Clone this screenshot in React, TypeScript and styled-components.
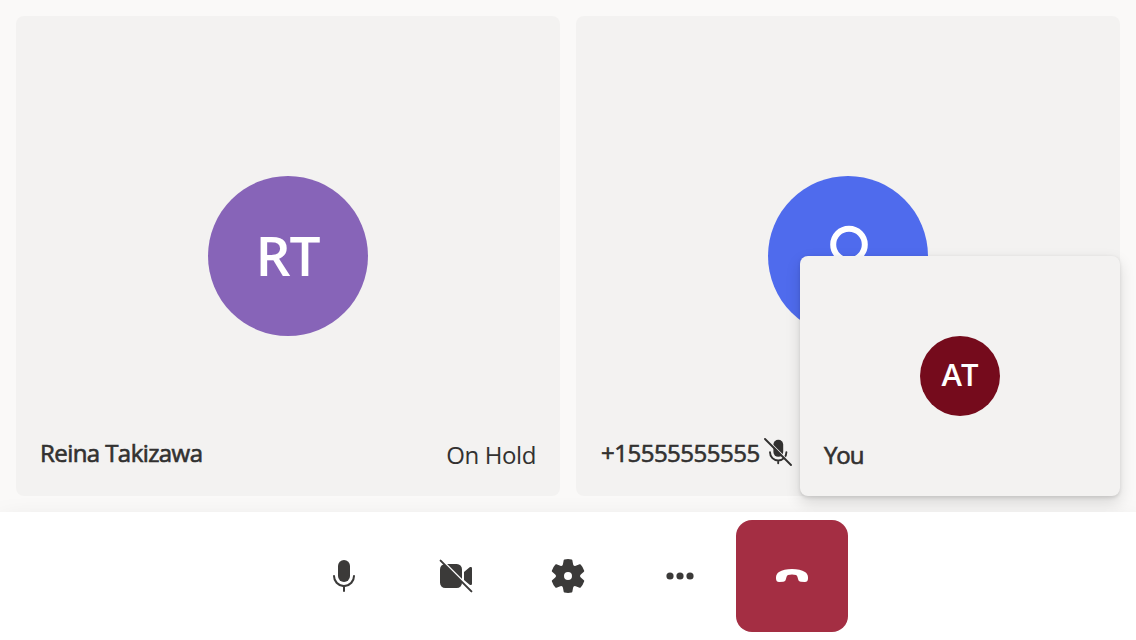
import React from 'react';
import styled, { createGlobalStyle } from 'styled-components';

const GlobalStyle = createGlobalStyle`
  * { box-sizing: border-box; }
  body {
    margin: 0;
    background: #faf9f8;
    color: #323130;
    font-family: 'Open Sans', 'Noto Sans', sans-serif;
    overflow: hidden;
  }
`;

const CallScreen = styled.main`
  height: 640px;
  display: flex;
  flex-direction: column;
`;

const Stage = styled.section`
  position: relative;
  flex: 1;
  display: grid;
  grid-template-columns: 1fr 1fr;
  gap: 16px;
  padding: 16px;
`;

const Tile = styled.article`
  display: grid;
  grid-template-rows: 160px 160px 160px;
  justify-items: center;
  border-radius: 8px;
  background: #f3f2f1;
`;

const Avatar = styled.div<{ $size: number; $color: string; $font?: number }>`
  grid-row: 2;
  display: flex;
  align-items: center;
  justify-content: center;
  width: ${p => p.$size}px;
  height: ${p => p.$size}px;
  padding-bottom: ${p => (p.$font ? 3 : 0)}px;
  padding-right: ${p => (p.$font ? 1 : 0)}px;
  border-radius: 50%;
  background: ${p => p.$color};
  color: #fff;
  font-size: ${p => p.$font ?? 16}px;
  font-weight: 600;
  line-height: 1;
  letter-spacing: -1px;
`;

const Caption = styled.footer`
  grid-row: 3;
  align-self: end;
  justify-self: stretch;
  display: flex;
  align-items: center;
  height: 48px;
  margin-bottom: 16px;
  padding: 0 24px;
  line-height: 32px;
  white-space: nowrap;
`;

const Name = styled.span<{ $spacing: number; $lift?: number; $indent?: number }>`
  margin-top: ${p => -(p.$lift ?? 6)}px;
  margin-left: ${p => p.$indent ?? 0}px;
  font-size: 24px;
  -webkit-text-stroke: 0.65px currentColor;
  letter-spacing: ${p => p.$spacing}px;
`;

const Status = styled.span`
  margin: -2px 0 0 auto;
  font-size: 24px;
  letter-spacing: -0.4px;
`;

const MutedIcon = styled.svg`
  width: 28px;
  height: 28px;
  margin: -8px 0 0 4px;
`;

const LocalPreview = styled.aside`
  position: absolute;
  right: 16px;
  bottom: 16px;
  width: 320px;
  height: 240px;
  display: grid;
  grid-template-rows: 80px 80px 80px;
  justify-items: center;
  border-radius: 8px;
  background: #f3f2f1;
  box-shadow: 0 6.4px 14.4px rgba(0, 0, 0, 0.132), 0 1.2px 3.6px rgba(0, 0, 0, 0.108);
`;

const ControlBar = styled.nav`
  position: relative;
  display: flex;
  justify-content: center;
  height: 128px;
  padding: 8px 0;
  background: #fff;
  box-shadow: 0 12.8px 28.8px rgba(0, 0, 0, 0.132);
`;

const ControlButton = styled.button<{ $danger?: boolean }>`
  display: flex;
  align-items: center;
  justify-content: center;
  width: 112px;
  height: 112px;
  padding: 0;
  border: 0;
  border-radius: 16px;
  background: ${p => (p.$danger ? '#a42e43' : 'transparent')};
  color: ${p => (p.$danger ? '#fff' : '#3b3a39')};

  svg {
    width: 40px;
    height: 40px;
    fill: currentColor;
  }
`;

const MicIcon = () => (
  <svg viewBox="0 0 20 20">
    <path d="M10 13a3 3 0 0 0 3-3V5a3 3 0 0 0-6 0v5a3 3 0 0 0 3 3Z" />
    <path d="M5 9.5a.5.5 0 0 1 .5.5 4.5 4.5 0 0 0 9 0 .5.5 0 0 1 1 0 5.5 5.5 0 0 1-5 5.48v2.02a.5.5 0 0 1-1 0v-2.02A5.5 5.5 0 0 1 4.5 10a.5.5 0 0 1 .5-.5Z" />
  </svg>
);

const CameraOffIcon = () => (
  <svg viewBox="0 0 20 20">
    <mask id="camera-cut">
      <path fill="#fff" d="M0 0h20v20H0z" />
      <path stroke="#000" strokeWidth="1.1" d="M1.75 .95l18 18" />
    </mask>
    <g mask="url(#camera-cut)">
      <rect x="2" y="4" width="11" height="12" rx="2.6" />
      <path d="M14 8l2.83-2.33c.5-.4 1.17-.1 1.17.5v7.66c0 .6-.67.9-1.17.5L14 12Z" />
    </g>
    <path d="M2.3 2.3l15.4 15.4" stroke="currentColor" strokeLinecap="round" strokeWidth="1" />
  </svg>
);

const SettingsIcon = () => (
  <svg viewBox="0 0 20 20">
    <path d="M1.91 7.38A8.5 8.5 0 0 1 3.7 4.3a.5.5 0 0 1 .54-.13l1.92.68a1 1 0 0 0 1.32-.76l.36-2a.5.5 0 0 1 .4-.4 8.53 8.53 0 0 1 3.55 0c.2.04.35.2.38.4l.37 2a1 1 0 0 0 1.32.76l1.92-.68a.5.5 0 0 1 .54.13 8.5 8.5 0 0 1 1.78 3.08c.06.2 0 .4-.15.54l-1.56 1.32a1 1 0 0 0 0 1.52l1.56 1.32a.5.5 0 0 1 .15.54 8.5 8.5 0 0 1-1.78 3.08.5.5 0 0 1-.54.13l-1.92-.68a1 1 0 0 0-1.32.76l-.37 2a.5.5 0 0 1-.38.4 8.53 8.53 0 0 1-3.56 0 .5.5 0 0 1-.39-.4l-.36-2a1 1 0 0 0-1.32-.76l-1.92.68a.5.5 0 0 1-.54-.13 8.5 8.5 0 0 1-1.78-3.08.5.5 0 0 1 .15-.54l1.56-1.32a1 1 0 0 0 0-1.52L2.06 7.92a.5.5 0 0 1-.15-.54ZM8 10a2 2 0 1 0 4 0 2 2 0 0 0-4 0Z" />
  </svg>
);

const MoreIcon = () => (
  <svg viewBox="0 0 20 20">
    <circle cx="5" cy="10" r="1.8" />
    <circle cx="10" cy="10" r="1.8" />
    <circle cx="15" cy="10" r="1.8" />
  </svg>
);

const HangUpIcon = () => (
  <svg viewBox="0 0 20 20">
    <path d="M2 10.7c0-1.1.5-2 1.5-2.7C5 7 7.3 6.5 10 6.5s5 .5 6.5 1.5c1 .7 1.5 1.6 1.5 2.7v.5c0 1.2-.7 1.9-1.7 1.8l-1.9-.1c-.75-.03-1.1-.4-1.3-1.1l-.4-1.4c-.12-.4-.3-.7-.7-.85A6 6 0 0 0 10 9.2a6 6 0 0 0-2 .35c-.4.15-.58.45-.7.85l-.4 1.4c-.2.7-.55 1.07-1.3 1.1l-1.9.1C2.7 13.1 2 12.4 2 11.2Z" />
  </svg>
);

const PersonIcon = () => (
  <svg width="82" height="82" viewBox="0 0 82 82" fill="none" stroke="#fff" strokeWidth="6">
    <circle cx="42" cy="29.5" r="15.8" />
    <path d="M15 72a27 27 0 0 1 54 0" />
  </svg>
);

const MutedMic = () => (
  <MutedIcon viewBox="0 0 28 28" fill="none" stroke="#323130" strokeWidth="1.9" strokeLinecap="round">
    <mask id="mic-cut">
      <path fill="#fff" stroke="none" d="M0 0h28v28H0z" />
      <path stroke="#000" strokeWidth="1.2" d="M1 -.6l28 28" />
    </mask>
    <g mask="url(#mic-cut)">
      <rect x="9.4" y="1.8" width="9.8" height="17" rx="4.8" fill="#323130" stroke="none" />
      <path d="M6 14.3a8.2 8.2 0 0 0 16.4 0M14.2 22.5v2.7" />
    </g>
    <path d="M1 1l26 26" />
  </MutedIcon>
);

export default function App() {
  return (
    <CallScreen>
      <GlobalStyle />
      <Stage>
        <Tile>
          <Avatar $size={160} $color="#8764b8" $font={55}>RT</Avatar>
          <Caption>
            <Name $spacing={-0.57}>Reina Takizawa</Name>
            <Status>On Hold</Status>
          </Caption>
        </Tile>
        <Tile>
          <Avatar $size={160} $color="#4f6bed"><PersonIcon /></Avatar>
          <Caption>
            <Name $spacing={-0.5} $indent={1}>+15555555555</Name>
            <MutedMic />
          </Caption>
        </Tile>
        <LocalPreview>
          <Avatar $size={80} $color="#750b1c" $font={31}>AT</Avatar>
          <Caption><Name $spacing={-1.1} $lift={2}>You</Name></Caption>
        </LocalPreview>
      </Stage>
      <ControlBar>
        <ControlButton aria-label="Mute"><MicIcon /></ControlButton>
        <ControlButton aria-label="Turn on camera"><CameraOffIcon /></ControlButton>
        <ControlButton aria-label="Settings"><SettingsIcon /></ControlButton>
        <ControlButton aria-label="More options"><MoreIcon /></ControlButton>
        <ControlButton aria-label="Leave call" $danger><HangUpIcon /></ControlButton>
      </ControlBar>
    </CallScreen>
  );
}
